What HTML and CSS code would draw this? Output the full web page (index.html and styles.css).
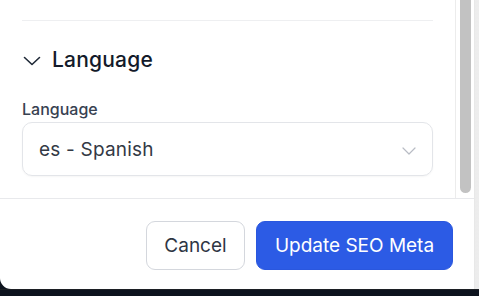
FILE: index.html
```html
<!DOCTYPE html>
<html lang="en">
<head>
<meta charset="utf-8">
<link rel="stylesheet" href="styles.css">
</head>
<body>
<div class="screen">
  <div class="top">
    <div class="modal">
      <div class="scroll">
        <div class="content">
          <div class="divider"></div>
          <div class="section-head">
            <svg class="chev" width="18" height="10" viewBox="0 0 18 10"><path d="M1.5 1.5 L9 8.5 L16.5 1.5" fill="none" stroke="#1f2937" stroke-width="1.6" stroke-linecap="round" stroke-linejoin="round"/></svg>
            <span class="section-title">Language</span>
          </div>
          <div class="label">Language</div>
          <div class="select">
            <span class="select-value">es - Spanish</span>
            <svg class="select-chev" width="14" height="8" viewBox="0 0 14 8"><path d="M1 1 L7 7 L13 1" fill="none" stroke="#b8bcc4" stroke-width="1.2" stroke-linecap="round" stroke-linejoin="round"/></svg>
          </div>
        </div>
        <div class="track"><div class="thumb"></div></div>
      </div>
      <div class="footer">
        <button class="btn btn-secondary">Cancel</button>
        <button class="btn btn-primary">Update SEO Meta</button>
      </div>
    </div>
    <div class="edge"></div>
  </div>
</div>
</body>
</html>
```

FILE: styles.css
```css
html, body {
  margin: 0;
  padding: 0;
  width: 479px;
  height: 296px;
  overflow: hidden;
  background: #0d131e;
  font-family: Inter, "Noto Sans", "Liberation Sans", sans-serif;
}
.screen {
  display: flex;
  flex-direction: column;
  height: 296px;
}
.top {
  display: flex;
  height: 289px;
  border-bottom: 1px solid #1c1f24;
}
.modal {
  width: 474px;
  background: #ffffff;
  border-bottom-left-radius: 11px;
  display: flex;
  flex-direction: column;
  overflow: hidden;
}
.edge {
  flex: 1;
  background: linear-gradient(to right, #e4e4e4 0, #ececec 1px, #ededed 100%);
}
.scroll {
  display: flex;
  height: 198px;
  border-bottom: 1px solid #e8e9ec;
}
.content {
  width: 411px;
  padding: 0 22px;
  display: flex;
  flex-direction: column;
}
.divider {
  margin-top: 20px;
  height: 1px;
  background: #eeeff1;
}
.section-head {
  margin-top: 25px;
  height: 28px;
  display: flex;
  align-items: center;
  gap: 11px;
  padding-left: 1px;
}
.chev { display: block; margin-top: 1px; }
.section-title {
  font-size: 21px;
  font-weight: 500;
  color: #131a2a;
  line-height: 28px;
  letter-spacing: 0.2px;
}
.label {
  margin-top: 25px;
  font-size: 16px;
  line-height: 20px;
  font-weight: 500;
  color: #374151;
}
.select {
  margin-top: 3px;
  height: 52px;
  border: 1px solid #e3e5e9;
  border-radius: 10px;
  display: flex;
  align-items: center;
  justify-content: space-between;
  padding: 0 16px 0 16px;
  box-shadow: 0 1px 2px rgba(0,0,0,0.04);
}
.select-value {
  font-size: 19px;
  color: #333945;
  letter-spacing: 0.2px;
}
.select-chev { display: block; margin-top: 4px; }
.track {
  width: 18px;
  border-left: 1px solid #ececec;
  display: flex;
  justify-content: center;
}
.thumb {
  width: 11px;
  height: 193px;
  margin-left: 1px;
  background: #c2c2c2;
  border-radius: 0 0 6px 6px;
}
.footer {
  flex: 1;
  display: flex;
  justify-content: flex-end;
  align-items: flex-start;
  gap: 11px;
  padding: 22px 21px 0 0;
}
.btn {
  font-family: Inter, "Noto Sans", "Liberation Sans", sans-serif;
  font-size: 19px;
  font-weight: 400;
  height: 49px;
  border-radius: 9px;
  cursor: pointer;
  padding: 0;
}
.btn-secondary {
  width: 99px;
  background: #ffffff;
  border: 1px solid #d4d7dd;
  color: #2f3644;
}
.btn-primary {
  width: 197px;
  background: #2c5be5;
  border: 1px solid #2a57de;
  color: #ffffff;
}
```
